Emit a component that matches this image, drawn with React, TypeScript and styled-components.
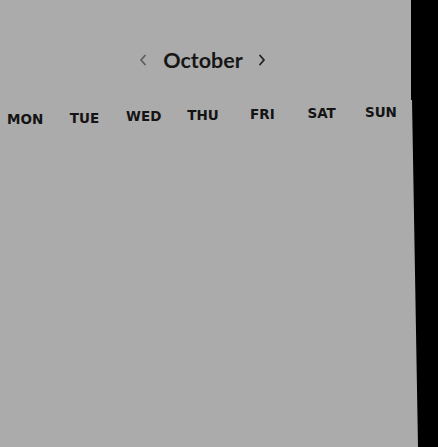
import * as React from 'react';
import styled, { createGlobalStyle } from 'styled-components';

const GlobalStyle = createGlobalStyle`
  html, body {
    margin: 0;
    padding: 0;
    background: #000;
    overflow: hidden;
  }
`;

const Page = styled.div`
  width: 438px;
  height: 447px;
  display: flex;
  flex-direction: column;
  background: #000;
`;

const Head = styled.header`
  width: 411px;
  height: 100px;
  background: #ababab;
  display: flex;
  flex-direction: column;
  align-items: center;
`;

const MonthBar = styled.div`
  margin-top: 45px;
  margin-right: 6px;
  display: flex;
  align-items: center;
  height: 30px;
`;

const Month = styled.h1`
  margin: 0 15px 0 16px;
  font-family: 'Lato', 'Open Sans', sans-serif;
  font-weight: 700;
  font-size: 21.5px;
  color: #161616;
`;

const Arrow = styled.button<{ $dim?: boolean }>`
  border: 0;
  background: none;
  padding: 0;
  width: 8px;
  height: 14px;
  display: flex;
  align-items: center;
  justify-content: center;
  color: ${(p) => (p.$dim ? '#5e5e5e' : '#1f1f1f')};
  svg {
    display: block;
  }
`;

const Body = styled.main`
  flex: 1;
  background: #ababab;
  clip-path: polygon(0 0, 412px 0, 418px 100%, 0 100%);
`;

const Week = styled.div`
  display: grid;
  grid-template-columns: repeat(7, 59.3px);
  margin-left: -4.5px;
  margin-top: -1px;
`;

const Day = styled.span<{ $shift: number }>`
  font-family: 'DejaVu Sans', sans-serif;
  font-weight: 700;
  font-size: 13.5px;
  color: #141414;
  text-align: center;
  transform: translateY(${(p) => p.$shift}px);
`;

const days = ['MON', 'TUE', 'WED', 'THU', 'FRI', 'SAT', 'SUN'];
const shifts = [12, 10.5, 9, 8, 7, 5.5, 4.5];

const Chevron = ({ left }: { left?: boolean }) => (
  <svg width="8" height="12" viewBox="0 0 8 12" fill="none">
    <path
      d={left ? 'M6 1.5 L2 6 L6 10.5' : 'M2 1.5 L6 6 L2 10.5'}
      stroke="currentColor"
      strokeWidth="1.8"
      strokeLinecap="round"
      strokeLinejoin="round"
    />
  </svg>
);

export default function App() {
  return (
    <Page>
      <GlobalStyle />
      <Head>
        <MonthBar>
          <Arrow $dim aria-label="previous month">
            <Chevron left />
          </Arrow>
          <Month>October</Month>
          <Arrow aria-label="next month">
            <Chevron />
          </Arrow>
        </MonthBar>
      </Head>
      <Body>
        <Week>
          {days.map((d, i) => (
            <Day key={d} $shift={shifts[i]}>
              {d}
            </Day>
          ))}
        </Week>
      </Body>
    </Page>
  );
}
